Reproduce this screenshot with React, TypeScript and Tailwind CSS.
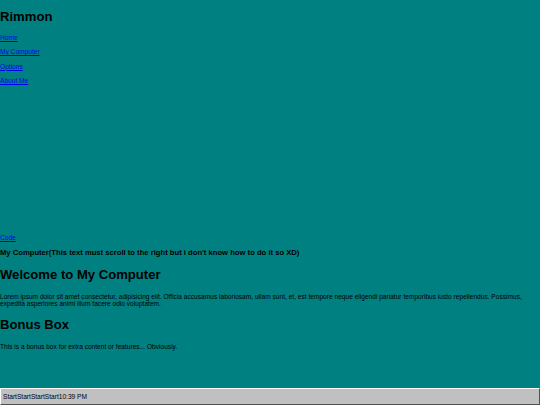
import React from "react";

export default function App() {
  const font = { fontFamily: '"Liberation Sans", Arial, sans-serif' };
  return (
    <div
      className="w-[540px] h-[405px] bg-[#008080] flex flex-col overflow-hidden text-black"
      style={font}
    >
      <div className="flex-1 flex flex-col items-start">
        <h1 className="mt-[9.2px] text-[13.1px] leading-[15px] font-bold">Rimmon</h1>
        <nav className="flex flex-col items-start gap-[6.9px] mt-[9.6px] text-[6.6px] leading-[7.5px]">
          <a href="#" className="text-[#0000ee] underline">Home</a>
          <a href="#" className="text-[#0000ee] underline">My Computer</a>
          <a href="#" className="text-[#0000ee] underline">Options</a>
          <a href="#" className="text-[#0000ee] underline">About Me</a>
        </nav>
        <a href="#" className="mt-[149.5px] text-[6.6px] leading-[7.5px] text-[#0000ee] underline">Code</a>
        <h3 className="mt-[8px] text-[7.65px] leading-[8.7px] font-bold">
          My Computer(This text must scroll to the right but i don't know how to do it so XD)
        </h3>
        <h1 className="mt-[9px] text-[13.1px] leading-[15px] font-bold">Welcome to My Computer</h1>
        <p className="mt-[10.6px] text-[6.6px] leading-[7.5px]">
          Lorem ipsum dolor sit amet consectetur, adipisicing elit. Officia accusamus laboriosam, ullam sunt, et, est tempore neque eligendi pariatur temporibus iusto repellendus. Possimus, expedita asperiores animi illum facere odio voluptatem.
        </p>
        <h2 className="mt-[9.4px] text-[13.1px] leading-[15px] font-bold">Bonus Box</h2>
        <p className="mt-[10.5px] text-[6.6px] leading-[7.5px]">
          This is a bonus box for extra content or features... Obviously.
        </p>
      </div>
      <div className="h-[17px] bg-[#c0c0c0] border-t border-l border-t-white border-l-white border-r border-b border-r-[#505050] border-b-[#505050] flex items-center px-[2px] text-[6.6px] leading-[7.5px]">
        <span>Start</span>
        <span>Start</span>
        <span>Start</span>
        <span>Start</span>
        <span>10:39 PM</span>
      </div>
    </div>
  );
}
